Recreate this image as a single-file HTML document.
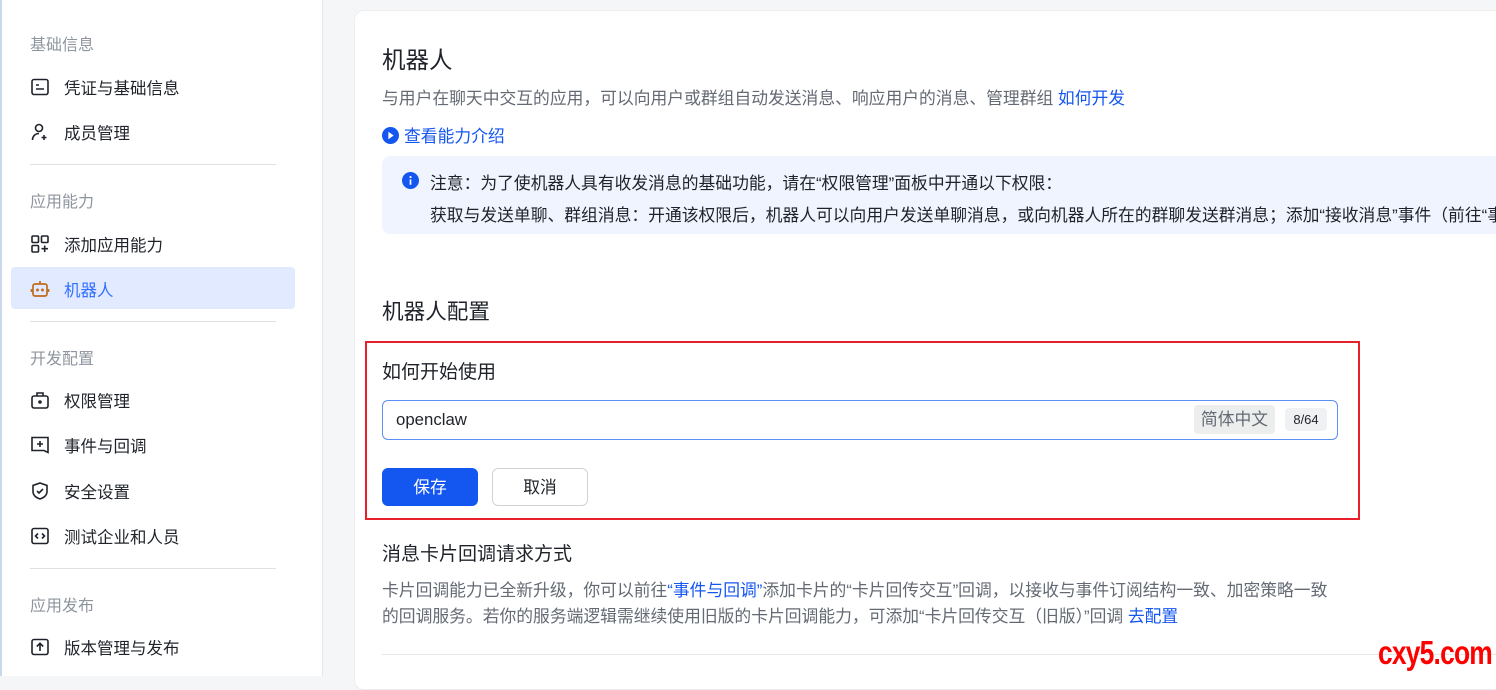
<!DOCTYPE html>
<html><head><meta charset="utf-8"><style>
*{margin:0;padding:0;box-sizing:border-box}
body{width:1496px;height:676px;overflow:hidden;background:#f5f6f7;font-family:"Liberation Sans","Noto Sans CJK SC",sans-serif;position:relative;color:#1f2329}
.side{position:absolute;left:0;top:0;width:323px;height:676px;background:#fff;border-right:1px solid #e4e6e9;border-left:2px solid #c9d8ea}
.grp{position:absolute;left:28px;font-size:16px;color:#8f959e}
.it{position:absolute;left:28px;font-size:16.5px;color:#1f2329;display:flex;align-items:center;height:24px}
.it svg{width:20px;height:20px;margin-right:14px}
.hr{position:absolute;left:28px;width:246px;height:1px;background:#dee0e3}
.act{position:absolute;left:9px;top:267px;width:284px;height:42px;background:#e1eaff;border-radius:4px}
.card{position:absolute;left:354px;top:10px;width:1160px;height:680px;background:#fff;border-radius:10px;border:1px solid #eceef0}
.a{position:absolute;white-space:nowrap}
.t{font-size:16.8px}
.blue{color:#1456f0}
</style></head><body>
<div class="side">
<div class="grp" style="top:31px">基础信息</div>
<div class="it" style="top:75px"><svg viewBox="0 0 20 20" fill="none" stroke="#1f2329" stroke-width="1.6"><rect x="2" y="2.5" width="16" height="15" rx="2"/><path d="M6 8h3M6 12h8"/></svg>凭证与基础信息</div>
<div class="it" style="top:120px"><svg viewBox="0 0 20 20" fill="none" stroke="#1f2329" stroke-width="1.6"><circle cx="9" cy="6" r="3.5"/><path d="M2.5 18c0-4 3-6.5 6.5-6.5M14 13v5M11.5 15.5h5"/></svg>成员管理</div>
<div class="hr" style="top:164px"></div>
<div class="grp" style="top:188px">应用能力</div>
<div class="it" style="top:232px"><svg viewBox="0 0 20 20" fill="none" stroke="#1f2329" stroke-width="1.6"><rect x="2" y="2" width="6.5" height="6.5" rx="1"/><rect x="11.5" y="2" width="6.5" height="6.5" rx="1"/><rect x="2" y="11.5" width="6.5" height="6.5" rx="1"/><path d="M14.7 11.5v6.5M11.5 14.7h6.5"/></svg>添加应用能力</div>
<div class="act"></div>
<div class="it" style="top:277px;color:#3370ff"><svg viewBox="0 0 20 20" fill="none" stroke="#c26b1a" stroke-width="1.7"><rect x="3" y="5" width="14" height="12" rx="2"/><path d="M10 2v3M1.5 10v3M18.5 10v3"/><circle cx="7.5" cy="11" r=".6" fill="#c26b1a"/><circle cx="12.5" cy="11" r=".6" fill="#c26b1a"/></svg>机器人</div>
<div class="hr" style="top:321px"></div>
<div class="grp" style="top:345px">开发配置</div>
<div class="it" style="top:388px"><svg viewBox="0 0 20 20" fill="none" stroke="#1f2329" stroke-width="1.6"><rect x="2" y="6" width="16" height="12" rx="2"/><path d="M7 6V3h6v3"/><circle cx="10" cy="12" r="1" fill="#1f2329"/></svg>权限管理</div>
<div class="it" style="top:433px"><svg viewBox="0 0 20 20" fill="none" stroke="#1f2329" stroke-width="1.6"><path d="M2 2.5h16v15l-4-2H2z"/><path d="M10 6v6M7 9h6"/></svg>事件与回调</div>
<div class="it" style="top:479px"><svg viewBox="0 0 20 20" fill="none" stroke="#1f2329" stroke-width="1.6"><path d="M10 2l7 2.5v6c0 4-3.5 6.5-7 7.5-3.5-1-7-3.5-7-7.5v-6z"/><path d="M7 10l2 2 4-4"/></svg>安全设置</div>
<div class="it" style="top:524px"><svg viewBox="0 0 20 20" fill="none" stroke="#1f2329" stroke-width="1.6"><rect x="2" y="2.5" width="16" height="15" rx="2"/><path d="M8 7.5l-2.5 2.5 2.5 2.5M12 7.5l2.5 2.5-2.5 2.5"/></svg>测试企业和人员</div>
<div class="hr" style="top:568px"></div>
<div class="grp" style="top:592px">应用发布</div>
<div class="it" style="top:635px"><svg viewBox="0 0 20 20" fill="none" stroke="#1f2329" stroke-width="1.6"><rect x="2" y="2.5" width="16" height="15" rx="2"/><path d="M10 14V6.5M6.8 9.5L10 6.3l3.2 3.2"/></svg>版本管理与发布</div>
</div>
<div class="card"></div>
<div class="a" style="left:382px;top:41px;font-size:23.5px">机器人</div>
<div class="a t" style="left:382px;top:85px;color:#646a73">与用户在聊天中交互的应用，可以向用户或群组自动发送消息、响应用户的消息、管理群组 <span class="blue">如何开发</span></div>
<div class="a blue t" style="left:382px;top:123px;display:flex;align-items:center"><svg width="17" height="17" viewBox="0 0 16 16" style="margin-right:5px"><circle cx="8" cy="8" r="8" fill="#1456f0"/><path d="M6 4.5l5 3.5-5 3.5z" fill="#fff"/></svg>查看能力介绍</div>
<div class="a" style="left:382px;top:156px;width:1120px;height:78px;background:#f0f4ff;border-radius:8px"></div>
<svg class="a" style="left:402px;top:172px" width="17" height="17" viewBox="0 0 16 16"><circle cx="8" cy="8" r="8" fill="#1456f0"/><rect x="7.2" y="7" width="1.6" height="5" fill="#fff"/><circle cx="8" cy="4.8" r="1" fill="#fff"/></svg>
<div class="a t" style="left:430px;top:170px">注意：为了使机器人具有收发消息的基础功能，请在“权限管理”面板中开通以下权限：</div>
<div class="a t" style="left:430px;top:202px">获取与发送单聊、群组消息：开通该权限后，机器人可以向用户发送单聊消息，或向机器人所在的群聊发送群消息；添加“接收消息”事件（前往“事</div>
<div class="a" style="left:382px;top:295px;font-size:21.6px">机器人配置</div>
<div class="a" style="left:365px;top:341px;width:995px;height:179px;border:2px solid #e8202a"></div>
<div class="a" style="left:382px;top:357px;font-size:19px">如何开始使用</div>
<div class="a" style="left:382px;top:400px;width:956px;height:40px;border:1px solid #5b8ff9;border-radius:6px"></div>
<div class="a t" style="left:396px;top:410px">openclaw</div>
<div class="a t" style="left:1194px;top:405px;width:81px;height:29px;background:#eceded;border-radius:4px;color:#646a73;text-align:center;line-height:29px">简体中文</div>
<div class="a" style="left:1285px;top:408px;width:42px;height:23px;background:#f0f1f2;border-radius:4px;font-size:13px;color:#1f2329;text-align:center;line-height:23px">8/64</div>
<div class="a t" style="left:382px;top:468px;width:96px;height:38px;background:#1456f0;border-radius:6px;color:#fff;text-align:center;line-height:40px">保存</div>
<div class="a t" style="left:492px;top:468px;width:96px;height:38px;border:1px solid #d0d3d6;border-radius:6px;text-align:center;line-height:38px">取消</div>
<div class="a" style="left:382px;top:539px;font-size:19px">消息卡片回调请求方式</div>
<div class="a t" style="left:382px;top:577px;color:#646a73">卡片回调能力已全新升级，你可以前往<span class="blue">“事件与回调”</span>添加卡片的“卡片回传交互”回调，以接收与事件订阅结构一致、加密策略一致</div>
<div class="a t" style="left:382px;top:603px;color:#646a73">的回调服务。若你的服务端逻辑需继续使用旧版的卡片回调能力，可添加“卡片回传交互（旧版）”回调 <span class="blue">去配置</span></div>
<div class="a" style="left:382px;top:654px;width:1114px;height:1px;background:#e4e6e9"></div>
<div class="a" style="left:1378px;top:634px;font-size:33px;font-weight:bold;color:#ff0000;letter-spacing:-1px;transform:scaleX(0.8);transform-origin:left">cxy5.com</div>
</body></html>
